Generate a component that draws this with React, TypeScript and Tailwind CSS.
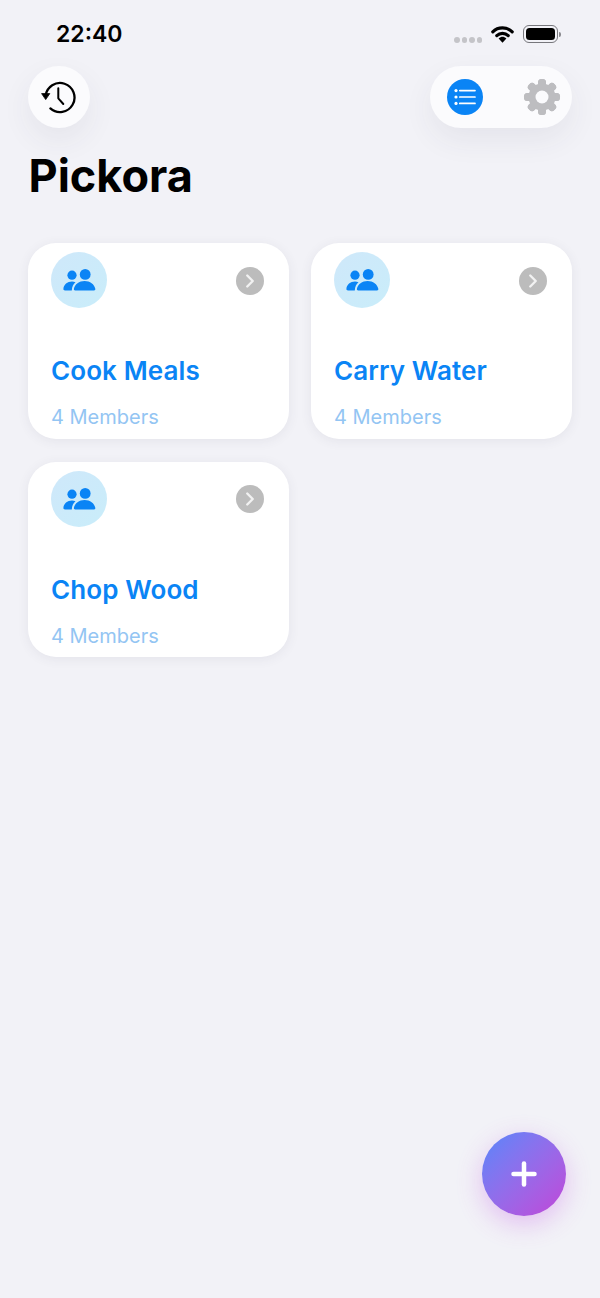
import { ChevronRight, Plus } from "lucide-react";

const groups = ["Cook Meals", "Carry Water", "Chop Wood"];

function StatusBar() {
  return (
    <div className="flex h-[66px] items-start justify-between pl-[56px] pr-[39px] pt-[20px]">
      <span className="text-[23px] font-semibold leading-[28px] text-black">22:40</span>
      <div className="-mt-[1px] flex items-start">
        <div className="mt-[18px] flex gap-[2px]">
          <span className="h-[5.5px] w-[5.5px] rounded-full bg-[#c4c4c8]" />
          <span className="h-[5.5px] w-[5.5px] rounded-full bg-[#c4c4c8]" />
          <span className="h-[5.5px] w-[5.5px] rounded-full bg-[#c4c4c8]" />
          <span className="h-[5.5px] w-[5.5px] rounded-full bg-[#c4c4c8]" />
        </div>
        <svg className="ml-[9px] mt-[6px]" width="23" height="18" viewBox="0 0 23 18" fill="none">
          <path d="M1.8 6.8C7 1.6 16 1.6 21.2 6.8" stroke="#000" strokeWidth="3.2" strokeLinecap="round" />
          <path d="M5.8 10.6C8.9 7.6 14.1 7.6 17.2 10.6" stroke="#000" strokeWidth="3.2" strokeLinecap="round" />
          <path d="M7.6 13.6C10.2 11.2 12.8 11.2 15.4 13.6L11.5 17.8Z" fill="#000" />
        </svg>
        <div className="ml-[9px] mt-[6px] flex items-center">
          <div className="flex h-[18px] w-[35px] items-center justify-center rounded-[6px] border-[1.5px] border-[#77777c]">
            <div className="h-[12px] w-[29px] rounded-[3.5px] bg-black" />
          </div>
          <div className="ml-[1px] h-[5px] w-[2px] rounded-r-full bg-[#8a8a8e]" />
        </div>
      </div>
    </div>
  );
}

function HistoryIcon() {
  return (
    <svg width="36" height="36" viewBox="0 0 36 36" fill="none">
      <path d="M4.6 16.8A14.5 14.5 0 1 1 9.4 29.4" stroke="#000" strokeWidth="2.3" strokeLinecap="round" />
      <path d="M0.6 14.6H8.8L4.7 20.6Z" fill="#000" stroke="#000" strokeWidth="0.8" strokeLinejoin="round" />
      <path d="M17.3 9.3V19.3L22.3 25" stroke="#000" strokeWidth="2" strokeLinecap="round" strokeLinejoin="round" />
    </svg>
  );
}

function GearIcon() {
  const teeth = [0, 45, 90, 135, 180, 225, 270, 315];
  return (
    <svg width="38" height="38" viewBox="0 0 38 38">
      {teeth.map((a) => (
        <rect key={a} x="15" y="1" width="8" height="36" rx="3.5" fill="#bdbdc0" transform={`rotate(${a} 19 19)`} />
      ))}
      <circle cx="19" cy="19" r="13.5" fill="#bdbdc0" />
      <circle cx="19" cy="19" r="6.5" fill="#fbfbfd" />
    </svg>
  );
}

function ListIcon() {
  return (
    <svg width="22" height="18" viewBox="0 0 22 18" fill="none">
      <circle cx="2" cy="2.6" r="1.6" fill="#fff" />
      <circle cx="2" cy="9" r="1.6" fill="#fff" />
      <circle cx="2" cy="15.4" r="1.6" fill="#fff" />
      <path d="M5.8 2.6H21M5.8 9H21M5.8 15.4H21" stroke="#fff" strokeWidth="1.7" strokeLinecap="round" />
    </svg>
  );
}

function PeopleIcon() {
  return (
    <svg width="33" height="22" viewBox="0 0 33 22" fill="#0a84f5">
      <circle cx="9" cy="6.2" r="4.6" />
      <circle cx="22.2" cy="5.4" r="5.4" />
      <path d="M0.4 20C0.6 15.6 4.4 12.6 9 12.6C10.2 12.6 11.4 12.8 12.5 13.2C10.4 14.8 9 17.4 8.8 21.4H2C1 21.4 0.4 21 0.4 20Z" />
      <path d="M12.2 21.4C11.2 21.4 10.7 20.8 10.9 19.8C11.8 15.2 16.2 12 21.6 12C27 12 31.4 15.2 32.3 19.8C32.5 20.8 32 21.4 31 21.4Z" />
    </svg>
  );
}

function GroupCard({ name }: { name: string }) {
  return (
    <div className="h-[195.5px] rounded-[28px] bg-white pl-[23px] pr-[25px] pt-[9px] shadow-[0_2px_12px_rgba(60,60,90,0.08)]">
      <div className="flex items-center justify-between">
        <div className="flex h-[56px] w-[56px] items-center justify-center rounded-full bg-gradient-to-br from-[#cfe8fa] to-[#c9edfa]">
          <PeopleIcon />
        </div>
        <div className="mt-[1px] flex h-[28px] w-[28px] items-center justify-center rounded-full bg-[#bcbcbc]">
          <ChevronRight size={22} color="#f2f2f2" strokeWidth={2.6} />
        </div>
      </div>
      <div className="mt-[46px] text-[26px] font-semibold leading-[34px] tracking-[0.1px] text-[#0a84f5]">{name}</div>
      <div className="mt-[17px] text-[20px] leading-[24px] text-[#93c5f3]">4 Members</div>
    </div>
  );
}

export default function App() {
  return (
    <div className="relative h-[1298px] w-[600px] overflow-hidden bg-[#f2f2f7] font-['Inter',sans-serif]">
      <StatusBar />

      <div className="flex items-start justify-between px-[28px]">
        <button className="flex h-[62px] w-[62px] items-center justify-center rounded-full bg-[#fbfbfd] shadow-[0_12px_30px_rgba(60,60,90,0.07)]">
          <HistoryIcon />
        </button>
        <div className="flex h-[62px] w-[142px] items-center justify-between rounded-full bg-[#fbfbfd] pl-[17px] pr-[11px] shadow-[0_12px_30px_rgba(60,60,90,0.07)]">
          <div className="flex h-[36px] w-[36px] items-center justify-center rounded-full bg-[#0a84f5]">
            <ListIcon />
          </div>
          <GearIcon />
        </div>
      </div>

      <h1 className="mt-[20px] pl-[28.5px] text-[45px] font-bold leading-[56px] text-black">Pickora</h1>

      <div className="mt-[39px] grid grid-cols-2 gap-x-[22px] gap-y-[23px] px-[28px]">
        {groups.map((g) => (
          <GroupCard key={g} name={g} />
        ))}
      </div>

      <button className="absolute left-[482px] top-[1132px] flex h-[84px] w-[84px] items-center justify-center rounded-full bg-gradient-to-br from-[#4f86fb] to-[#c042d8] shadow-[0_8px_26px_rgba(190,70,225,0.3)]">
        <Plus size={36} color="#fff" strokeWidth={3} />
      </button>
    </div>
  );
}
